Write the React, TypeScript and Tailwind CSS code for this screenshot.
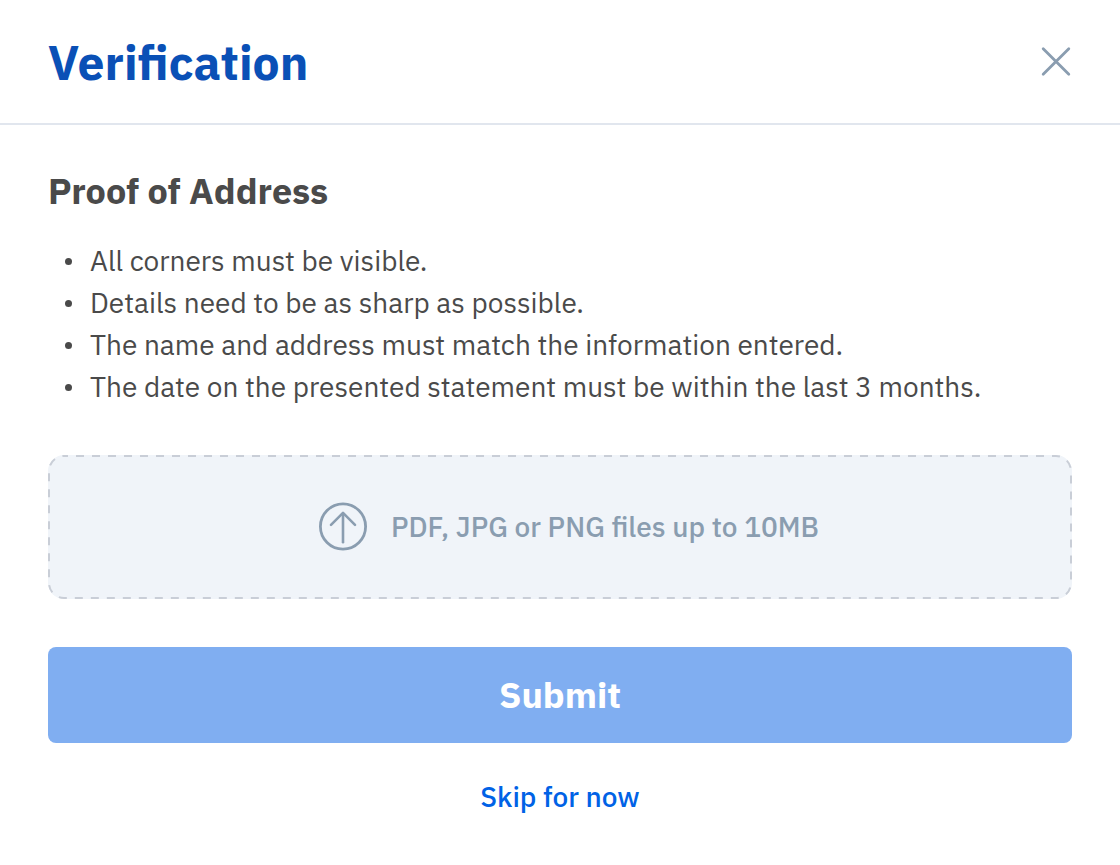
import { useState } from 'react';

const REQUIREMENTS = [
  'All corners must be visible.',
  'Details need to be as sharp as possible.',
  'The name and address must match the information entered.',
  'The date on the presented statement must be within the last 3 months.',
];

function CloseIcon() {
  return (
    <svg className="size-8" viewBox="0 0 32 32" fill="none" stroke="currentColor" strokeWidth="2.8" strokeLinecap="round" aria-hidden="true">
      <path d="M3.2 2.7 28.8 28.3M28.8 2.7 3.2 28.3" />
    </svg>
  );
}

function UploadIcon() {
  return (
    <svg className="size-12 shrink-0 overflow-visible" viewBox="0 0 48 48" fill="none" stroke="currentColor" strokeWidth="2.8" aria-hidden="true">
      <circle cx="24" cy="23.5" r="22.6" />
      <path d="M24 39.3V10.5" strokeWidth="2.6" strokeLinecap="round" />
      <path d="M12 21.9 24 9.9 36 21.9" strokeWidth="2.6" strokeLinecap="round" strokeLinejoin="round" />
    </svg>
  );
}

export default function App() {
  const [fileName, setFileName] = useState('');

  return (
    <div className="min-h-screen bg-white font-['IBM_Plex_Sans','Roboto',sans-serif] text-[#4a4a4a]">
      <header className="flex items-center justify-between border-b-2 border-[#e1e6ee] px-12 pt-8 pb-[31px]">
        <h1 className="text-5xl leading-[60px] font-bold text-[#0a50b6]">Verification</h1>
        <button type="button" aria-label="Close" className="text-[#8a9db0]">
          <CloseIcon />
        </button>
      </header>

      <main className="flex flex-col px-12 pt-[42px]">
        <h2 className="text-[36px] leading-12 font-bold">Proof of Address</h2>
        <ul className="mt-[25px] mb-[47px] text-[28px] leading-[42px]">
          {REQUIREMENTS.map(text => (
            <li key={text} className="flex gap-[18px] pl-[17px]">
              <span className="mt-[18px] size-[7px] shrink-0 rounded-full bg-[#4a4a4a]" />
              <span>{text}</span>
            </li>
          ))}
        </ul>

        <label className="relative flex h-36 cursor-pointer items-center justify-center gap-6 rounded-2xl bg-[#f0f4f9] pl-[18px] text-[28px] font-medium text-[#8a9db0]">
          {/* dashed outline */}
          <svg className="pointer-events-none absolute inset-px size-[calc(100%-2px)] overflow-visible" fill="none" aria-hidden="true">
            <rect width="100%" height="100%" rx="15" stroke="#c9ced7" strokeWidth="2" strokeDasharray="8 8" strokeDashoffset="4" />
          </svg>
          <UploadIcon />
          <span>{fileName || 'PDF, JPG or PNG files up to 10MB'}</span>
          <input
            type="file"
            accept=".pdf,.jpg,.png"
            className="sr-only"
            onChange={e => setFileName(e.target.files?.[0]?.name ?? '')}
          />
        </label>

        <button type="button" className="mt-12 h-24 rounded-lg bg-[#80aef1] text-[36px] font-bold text-white">
          Submit
        </button>
        <button type="button" className="mt-8 self-center text-[28px] leading-11 font-medium text-[#0062e6]">
          Skip for now
        </button>
      </main>
    </div>
  );
}
